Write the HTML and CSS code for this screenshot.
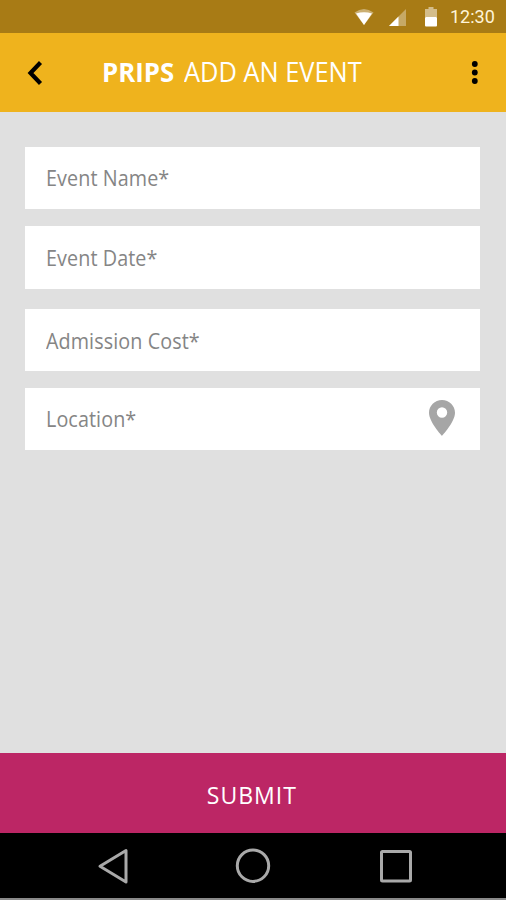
FILE: index.html
```html
<!DOCTYPE html>
<html lang="en">
<head>
    <meta charset="UTF-8">
    <meta name="viewport" content="width=device-width, initial-scale=1.0">
    <title>Add an event</title>
    <link rel="stylesheet" href="styles.css">
</head>
<body>
    <div class="status-bar">
        <svg class="wifi" width="20" height="18" viewBox="0 0 20 18">
            <path d="M0.5 4.500Q10 -2.500 19.500 4.500L10 17Z" fill="#fff" opacity="0.4"/>
            <path d="M2 5.500Q10 3 18 5.500L10 17Z" fill="#fff"/>
        </svg>
        <svg class="signal" width="17" height="17" viewBox="0 0 17 17">
            <path d="M17 0V17H0Z" fill="#fff" opacity="0.35"/>
            <path d="M9.500 7.500V17H0Z" fill="#fff"/>
        </svg>
        <svg class="battery" width="12" height="20" viewBox="0 0 12 20">
            <path d="M3.500 0H8.500V2H12V10H0V2H3.500Z" fill="#fff" opacity="0.5"/>
            <rect y="10" width="12" height="9.500" rx="1" fill="#fff"/>
        </svg>
        <span class="time">12:30</span>
    </div>

    <header class="header">
        <svg class="back" width="18" height="26" viewBox="0 0 18 26">
            <path d="M13.500 2.500L3.500 13L13.500 23.500" fill="none" stroke="#000" stroke-width="4.200"/>
        </svg>
        <h1 class="title"><b class="brand">PRIPS</b><span class="page-name">ADD AN EVENT</span></h1>
        <svg class="more" width="8" height="26" viewBox="0 0 8 26">
            <circle cx="3.800" cy="4" r="2.900"/>
            <circle cx="3.800" cy="12.500" r="2.900"/>
            <circle cx="3.800" cy="21" r="2.900"/>
        </svg>
    </header>

    <form class="form">
        <label class="field"><span class="label">Event Name*</span></label>
        <label class="field date"><span class="label">Event Date*</span></label>
        <label class="field cost"><span class="label">Admission Cost*</span></label>
        <label class="field location">
            <span class="label">Location*</span>
            <svg class="pin" width="26" height="36" viewBox="0 0 26 36">
                <path d="M13 0C5.800 0 0 5.700 0 12.800C0 22 13 36 13 36S26 22 26 12.800C26 5.700 20.200 0 13 0ZM13 7.300A5.200 5.200 0 1 1 13 17.700A5.200 5.200 0 1 1 13 7.300Z" fill="#a6a6a6"/>
            </svg>
        </label>
    </form>

    <button class="submit" type="button"><span>SUBMIT</span></button>

    <nav class="nav-bar">
        <svg width="32" height="36" viewBox="0 0 32 36">
            <path d="M29 2.500V34L3 18.300Z" fill="none" stroke="#a9a9a9" stroke-width="3" stroke-linejoin="round"/>
        </svg>
        <svg class="home" width="36" height="36" viewBox="0 0 36 36">
            <circle cx="18" cy="17.700" r="15.700" fill="none" stroke="#a9a9a9" stroke-width="3"/>
        </svg>
        <svg width="32" height="36" viewBox="0 0 32 36">
            <rect x="1.500" y="3.500" width="29" height="29.500" rx="1" fill="none" stroke="#a9a9a9" stroke-width="3"/>
        </svg>
    </nav>
</body>
</html>
```
FILE: styles.css
```css
* {
    box-sizing: border-box;
}
body {
    display: flex;
    flex-direction: column;
    height: 900px;
    margin: 0;
    background: #e0e0e0;
    font-family: "Open Sans", "Noto Sans", sans-serif;
}
.status-bar {
    display: flex;
    align-items: center;
    height: 33px;
    padding-left: 354px;
    background: #a87b15;
}
.signal {
    margin-left: 15px;
    margin-top: 1px;
}
.battery {
    margin-left: 19px;
}
.time {
    margin-left: 13px;
    color: #fff4d8;
    font: 18px Roboto, sans-serif;
}
.header {
    display: flex;
    align-items: center;
    height: 79px;
    padding: 0 27px;
    background: #efb31d;
}
.title {
    display: flex;
    flex: 1;
    margin: 0 0 2px 57px;
    color: #fff;
    font-size: 27px;
    white-space: nowrap;
}
.brand, .page-name, .label, .submit span {
    display: inline-block;
    transform: scaleX(0.94);
    transform-origin: left center;
}
.brand {
    width: 82px;
    font-weight: 700;
    transform: scaleX(0.955);
}
.page-name {
    font-weight: 400;
}
.form {
    flex: 1;
    padding: 35px 26px 0 25px;
}
.field {
    display: flex;
    align-items: center;
    height: 62px;
    margin-bottom: 17px;
    padding: 0 25px 0 21px;
    background: #fff;
}
.date {
    height: 63px;
    margin-bottom: 20px;
}
.cost .label {
    padding-top: 1px;
}
.label {
    flex: 1;
    color: #858585;
    font-size: 21px;
    letter-spacing: 0.1px;
}
.pin {
    margin-bottom: 3px;
}
.submit {
    height: 80px;
    padding: 3px 3px 0 0;
    border: 0;
    background: #bc2665;
    color: #fff;
    font-family: inherit;
    font-size: 24px;
}
.submit span {
    letter-spacing: 1px;
    transform: scaleX(0.96);
    transform-origin: center;
}
.nav-bar {
    display: flex;
    align-items: center;
    justify-content: space-between;
    height: 67px;
    padding: 0 94px 0 97px;
    border-bottom: 2px solid #8a8a8a;
    background: #000;
}
.home {
    margin-right: 3px;
}
```
